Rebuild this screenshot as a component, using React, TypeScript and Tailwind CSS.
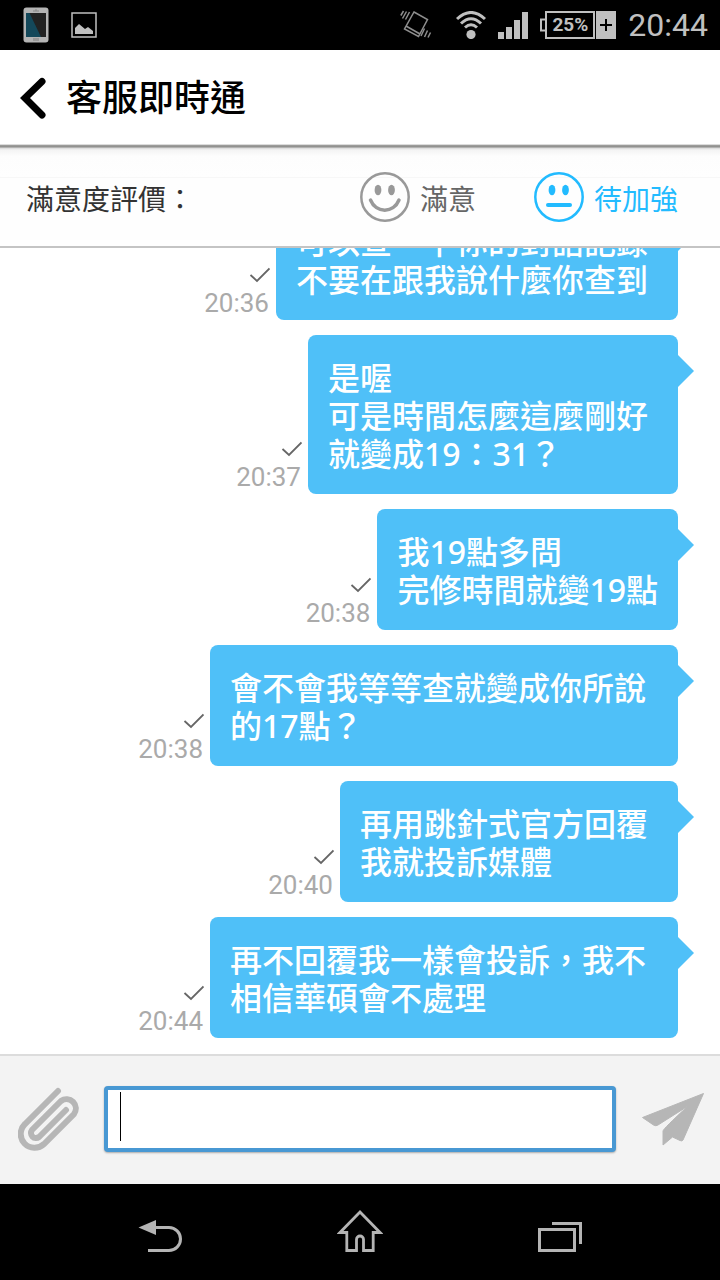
import { useState } from "react";

type Message = {
  text: string;
  time: string;
  padding: string;
};

const messages: Message[] = [
  {
    text: "可以查一下你的對話記錄\n不要在跟我說什麼你查到",
    time: "20:36",
    padding: "pl-5 pr-[30px]",
  },
  {
    text: "是喔\n可是時間怎麼這麼剛好\n就變成19：31？",
    time: "20:37",
    padding: "pl-5 pr-[30px]",
  },
  { text: "我19點多問\n完修時間就變19點", time: "20:38", padding: "px-5" },
  {
    text: "會不會我等等查就變成你所說的17點？",
    time: "20:38",
    padding: "pl-5 pr-[30px]",
  },
  {
    text: "再用跳針式官方回覆\n我就投訴媒體",
    time: "20:40",
    padding: "pl-5 pr-[30px]",
  },
  {
    text: "再不回覆我一樣會投訴，我不相信華碩會不處理",
    time: "20:44",
    padding: "pl-5 pr-[30px]",
  },
];

function StatusBar() {
  return (
    <div className="flex h-[50px] shrink-0 items-center bg-black pl-[23px] pr-3 font-['Roboto',sans-serif] text-[#c0c0c0]">
      <svg width="26" height="36" viewBox="0 0 26 36">
        <rect x="0.5" y="0.5" width="25" height="35" rx="3" fill="#b4b4b4" />
        <rect x="3" y="6" width="20" height="24" fill="#222" />
        <path d="M3 6H6.500L18 30H3Z" fill="#14485a" />
        <path d="M10 4H16M13 2V4" stroke="#888" />
        <rect x="10" y="31" width="6" height="3" fill="#999" />
      </svg>
      <svg className="ml-[22px]" width="26" height="26" viewBox="0 0 26 26">
        <rect x="1" y="1" width="24" height="24" fill="none" stroke="currentColor" strokeWidth="1.500" />
        <path d="M4 22V16L8 12L14 17L17 15L22 19V22Z" fill="currentColor" />
      </svg>

      <div className="ml-auto flex items-center gap-3">
        <svg className="mr-3" width="32" height="30" viewBox="0 0 32 30" fill="none" stroke="#8e8e8e" strokeWidth="1.500">
          <path d="M14 2L27.500 9.500L18.500 26.500L4.500 19ZM6 16L20 24" />
          <path d="M3.500 1L0.800 5.500M6.500 1.500L2.500 8.500M9.500 2L5.500 9.500" />
          <path d="M24.500 18.500L21 26M27.500 20.500L24.500 27M30.500 22.500L28 27.500" />
        </svg>
        <svg width="30" height="28" viewBox="0 0 30 28" fill="none" stroke="currentColor" strokeWidth="3">
          <path d="M1 8Q15 -5 29 8" />
          <path d="M5 12.500Q15 3 25 12.500" />
          <path d="M9 16.500Q15 11 21 16.500" />
          <circle cx="15" cy="23.500" r="4.600" fill="currentColor" stroke="none" />
        </svg>
        <svg width="30" height="28" viewBox="0 0 30 28" fill="currentColor">
          <path d="M0 21H6V28H0ZM8 16H14V28H8ZM16 9H22V28H16ZM24 1H30V28H24Z" />
        </svg>
        <div className="flex h-7 items-center">
          <svg width="5" height="16" viewBox="0 0 5 16" fill="none" stroke="currentColor" strokeWidth="2">
            <path d="M5 2.500H1V13.500H5" />
          </svg>
          <div className="flex h-7 w-[50px] items-center justify-center border-2 border-[#c0c0c0] text-[19px] font-bold leading-6">
            25%
          </div>
          <svg className="ml-px" width="20" height="28" viewBox="0 0 20 28">
            <rect width="20" height="28" fill="currentColor" />
            <path d="M4 14H16M10 8V20" stroke="#000" strokeWidth="2" />
          </svg>
        </div>
        <span className="text-[32px] leading-9">20:44</span>
      </div>
    </div>
  );
}

function Face({ happy }: { happy: boolean }) {
  return (
    <svg width="50" height="50" viewBox="0 0 50 50" fill="none" stroke="currentColor">
      <circle cx="25" cy="25" r="23.700" strokeWidth="2.500" />
      <ellipse cx="18" cy="18" rx="3.400" ry="5.300" fill="currentColor" stroke="none" />
      <ellipse cx="31.500" cy="18" rx="3.400" ry="5.300" fill="currentColor" stroke="none" />
      {happy ? (
        <path d="M10.500 28C16 41.500 33.500 41.500 39 28" strokeWidth="3.500" strokeLinecap="round" />
      ) : (
        <path d="M14 33H36" strokeWidth="4" strokeLinecap="round" />
      )}
    </svg>
  );
}

function Bubble({ message }: { message: Message }) {
  return (
    <li className="flex items-end justify-end gap-[6px]">
      <div className="flex flex-col items-end pb-[2px] font-['Roboto',sans-serif] text-[#aaa]">
        <svg width="21" height="16" viewBox="0 0 21 16" fill="none" stroke="#666" strokeWidth="1.800">
          <path d="M1.500 8L8 14L20.500 1.500" />
        </svg>
        <time className="mt-[5px] pr-px text-[26px] leading-[30px]">{message.time}</time>
      </div>
      <div className={`relative max-w-[468px] rounded-lg bg-[#4fc0f8] pb-[21px] pt-6 text-[32px] font-medium leading-[38px] text-white ${message.padding}`}>
        <p className="whitespace-pre-line">{message.text}</p>
        <svg className="absolute left-full top-5" width="16" height="32" viewBox="0 0 16 32" fill="#4fc0f8">
          <path d="M0 0L16 16L0 32Z" />
        </svg>
      </div>
    </li>
  );
}

export default function App() {
  const [draft, setDraft] = useState("");

  return (
    <div className="flex h-screen flex-col overflow-hidden bg-white font-['Noto_Sans','Noto_Sans_CJK_TC',sans-serif]">
      <StatusBar />

      <header className="flex h-[94px] shrink-0 items-center bg-white pl-5 pt-[2px]">
        <button type="button" aria-label="返回">
          <svg width="26" height="42" viewBox="0 0 26 42" fill="none" stroke="#000" strokeWidth="7" strokeLinecap="round" strokeLinejoin="miter">
            <path d="M22 4.500L5 21L22 38" />
          </svg>
        </button>
        <h1 className="ml-5 text-[36px] font-medium leading-[52px] text-black">客服即時通</h1>
      </header>

      <section className="flex h-[104px] shrink-0 items-center border-b-2 border-[#c4c4c4] bg-[linear-gradient(#dcdcdc_0px,#dcdcdc_1px,#a0a09e_1px,#8c8c8a_3px,#d8d8d8_4px,#f4f4f4_6px,#fdfdfd_12px,#fefefe_33px,#f7f7f7_33px,#f7f7f7_34px,#fefefe_34px)] pl-[26px] pr-[42px] pt-1 text-[28px] leading-10">
        <span className="pt-[3px] text-[#333]">滿意度評價：</span>
        <div className="ml-auto flex gap-[58px]">
          <button type="button" className="flex items-center gap-[10px] text-[#999]">
            <Face happy />
            <span className="pt-[3px] text-[#666]">滿意</span>
          </button>
          <button type="button" className="flex items-center gap-[10px] text-[#22bbff]">
            <Face happy={false} />
            <span className="pt-[3px]">待加強</span>
          </button>
        </div>
      </section>

      <ul className="flex min-h-0 flex-1 flex-col justify-end gap-[15px] overflow-hidden pb-4 pr-[42px]">
        {messages.map((message) => (
          <Bubble key={message.text} message={message} />
        ))}
      </ul>

      <form
        className="flex h-[130px] shrink-0 items-center border-t-2 border-[#dcdcdc] bg-[#f3f3f3] pb-[2px] pl-[18px] pr-4"
        onSubmit={(e) => e.preventDefault()}
      >
        <button type="button" aria-label="附加檔案">
          <svg width="62" height="64" viewBox="0 0 62 64" fill="none" stroke="#b6b6b6" strokeWidth="6" strokeLinecap="round">
            <path d="M40 4L7 37A13.500 13.500 0 0 0 26 57L56 27A9.300 9.300 0 0 0 43 14L14 43A5 5 0 0 0 21 50L48 23" />
          </svg>
        </button>
        <div className="relative ml-6 h-[66px] flex-1">
          <input
            type="text"
            aria-label="訊息"
            value={draft}
            onChange={(e) => setDraft(e.target.value)}
            className="h-full w-full rounded-[4px] border-4 border-[#4898d3] bg-white px-3 text-[32px] shadow-[0_1px_2px_rgba(0,0,0,0.3)] caret-transparent outline-none"
          />
          <span className="absolute left-4 top-[6px] h-[49px] w-px bg-black" />
        </div>
        <button type="submit" aria-label="傳送" className="ml-[26px]">
          <svg width="62" height="53" viewBox="0 0 62 53" fill="#b6b6b6" stroke="#b6b6b6" strokeLinejoin="round">
            <path d="M0.500 24.500L61.500 0.500L41 47Q40 48.500 38 47.500L30.500 44L21 52V38Q21 36 46 13L16 32Q14 33.500 11.500 32Z" />
          </svg>
        </button>
      </form>

      <nav className="grid h-24 shrink-0 grid-cols-3 items-end bg-black px-[60px] pb-7 text-[#b4b4b4]">
        <button type="button" aria-label="返回" className="flex justify-center">
          <svg width="44" height="34" viewBox="0 0 44 34" fill="none" stroke="currentColor" strokeWidth="3">
            <path d="M0.500 9.500L18 2V17Z" fill="currentColor" stroke="none" />
            <path d="M17 9.500H31A11.500 11.500 0 0 1 31 32.500H10" />
          </svg>
        </button>
        <button type="button" aria-label="主畫面" className="flex justify-center">
          <svg width="46" height="42" viewBox="0 0 46 42" fill="none" stroke="currentColor" strokeWidth="2.800">
            <path d="M23 2L43 22.500H36.200V40.500H26.500V29.500A3.500 3.500 0 0 0 19.500 29.500V40.500H9.800V22.500H3Z" />
          </svg>
        </button>
        <button type="button" aria-label="最近使用" className="flex justify-center">
          <svg width="44" height="30" viewBox="0 0 44 30" fill="none" stroke="currentColor" strokeWidth="3">
            <rect x="1.500" y="7.500" width="35" height="21" />
            <path d="M14 1.500H42.500V22" />
          </svg>
        </button>
      </nav>
    </div>
  );
}
